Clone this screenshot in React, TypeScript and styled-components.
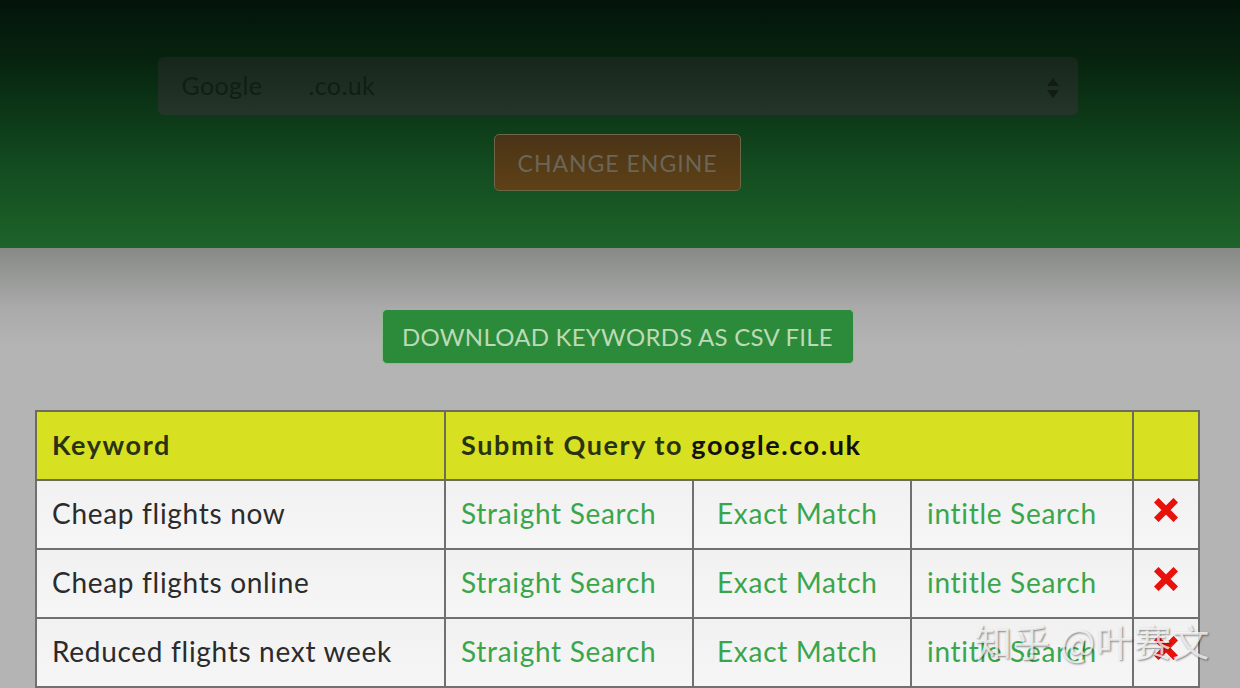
import * as React from "react";
import styled, { createGlobalStyle } from "styled-components";

const GlobalStyle = createGlobalStyle`
  html, body {
    margin: 0;
    padding: 0;
    background: #b4b4b4;
    font-family: Lato, "Open Sans", "Noto Sans", sans-serif;
  }
`;

const keywords = ["Cheap flights now", "Cheap flights online", "Reduced flights next week"];
const actions = ["Straight Search", "Exact Match", "intitle Search"];

const RemoveIcon: React.FC = () => (
  <svg width="24" height="24" viewBox="0 0 24 24">
    <path
      d="M4.5 4.5 L19.5 19.5 M19.5 4.5 L4.5 19.5"
      stroke="#e8120c"
      strokeWidth="6.5"
      strokeLinecap="square"
    />
  </svg>
);

const App: React.FC = () => {
  return (
    <Page>
      <GlobalStyle />
      <Header>
        <EngineSelect>
          <SelectText>
            <span>Google</span>
            <span>.co.uk</span>
          </SelectText>
          <Arrows>
            <svg width="14" height="24" viewBox="0 0 14 24">
              <path d="M7 2 L13 10 L1 10 Z" fill="#111d13" />
              <path d="M7 22 L13 14 L1 14 Z" fill="#111d13" />
            </svg>
          </Arrows>
        </EngineSelect>
        <ChangeButton>CHANGE ENGINE</ChangeButton>
      </Header>
      <Main>
        <DownloadButton>DOWNLOAD KEYWORDS AS CSV FILE</DownloadButton>
        <Table>
          <colgroup>
            <col style={{ width: 409 }} />
            <col style={{ width: 248 }} />
            <col style={{ width: 218 }} />
            <col style={{ width: 222 }} />
            <col style={{ width: 66 }} />
          </colgroup>
          <thead>
            <tr>
              <Th>Keyword</Th>
              <Th colSpan={3}>
                Submit Query to <Domain>google.co.uk</Domain>
              </Th>
              <Th />
            </tr>
          </thead>
          <tbody>
            {keywords.map((k) => (
              <tr key={k}>
                <Td>{k}</Td>
                {actions.map((a, i) => (
                  <Td key={a} $link $pad={i === 1 ? 23 : 15}>
                    {a}
                  </Td>
                ))}
                <Td $center>
                  <RemoveIcon />
                </Td>
              </tr>
            ))}
          </tbody>
        </Table>
      </Main>
      <Watermark>知乎 @叶赛文</Watermark>
    </Page>
  );
};

const Page = styled.div`
  position: relative;
  width: 1240px;
  height: 688px;
  overflow: hidden;
`;

const Header = styled.header`
  height: 248px;
  box-sizing: border-box;
  padding: 57px 5px 0 0;
  display: flex;
  flex-direction: column;
  align-items: center;
  gap: 19px;
  background: linear-gradient(to bottom, #03140a 0%, #07240f 25%, #124a1f 65%, #1e6329 100%);
`;

const EngineSelect = styled.div`
  width: 920px;
  height: 58px;
  box-sizing: border-box;
  border-radius: 6px;
  background: linear-gradient(to bottom, #17261b, #243529);
  display: flex;
  align-items: center;
  justify-content: space-between;
  padding: 0 18px 0 24px;
`;

const SelectText = styled.div`
  display: flex;
  gap: 46px;
  font-size: 25px;
  letter-spacing: 0.4px;
  color: #101e13;
  margin-top: -3px;
`;

const Arrows = styled.div`
  display: flex;
  margin-top: 4px;
`;

const ChangeButton = styled.div`
  width: 247px;
  height: 57px;
  box-sizing: border-box;
  border: 1.5px solid #6e6448;
  border-radius: 5px;
  background: linear-gradient(to bottom, #4a3416, #5e4116);
  color: #6b6656;
  font-size: 23px;
  letter-spacing: 1px;
  display: flex;
  align-items: center;
  justify-content: center;
`;

const Main = styled.main`
  height: 440px;
  background: linear-gradient(to bottom, #878987 0px, #a9aaa9 60px, #b4b4b4 100px, #b4b4b4 100%);
  display: flex;
  flex-direction: column;
  align-items: flex-start;
  padding-top: 61px;
  box-sizing: border-box;
`;

const DownloadButton = styled.div`
  align-self: center;
  margin-right: 5px;
  width: 472px;
  height: 56px;
  box-sizing: border-box;
  border: 1.5px solid #8fbf8f;
  border-radius: 5px;
  background: #2c8b3a;
  color: #bddab6;
  font-size: 24px;
  letter-spacing: 0.25px;
  display: flex;
  align-items: center;
  justify-content: center;
`;

const Table = styled.table`
  margin: 46px 0 0 35px;
  width: 1163px;
  border-collapse: collapse;
  table-layout: fixed;
  border: 2px solid #707070;
`;

const Th = styled.th`
  height: 69px;
  box-sizing: border-box;
  padding: 0 0 3px 15px;
  text-align: left;
  background: #d8e022;
  border: 2px solid #6c6c5c;
  color: #2a3214;
  font-size: 27px;
  letter-spacing: 1.6px;
  font-weight: 700;
`;

const Domain = styled.span`
  color: #111;
`;

const Td = styled.td<{ $link?: boolean; $center?: boolean; $pad?: number }>`
  height: 69px;
  box-sizing: border-box;
  background: linear-gradient(to bottom, #f1f1f1, #f6f6f6);
  border: 2px solid #707070;
  color: ${(p) => (p.$link ? "#3aa64c" : "#2b2b2b")};
  font-size: 28px;
  letter-spacing: 0.7px;
  text-align: ${(p) => (p.$center ? "center" : "left")};
  padding: 0 0 3px ${(p) => (p.$center ? 0 : p.$pad ?? 15)}px;
  vertical-align: middle;
  white-space: nowrap;
  overflow: hidden;

  svg {
    display: block;
    margin: -6px auto 0;
  }
`;

const Watermark = styled.div`
  position: absolute;
  left: 975px;
  top: 614px;
  font-family: "Noto Sans CJK SC", sans-serif;
  font-size: 37px;
  color: rgba(255, 255, 255, 0.75);
  text-shadow: 1px 1px 2px rgba(0, 0, 0, 0.45);
  letter-spacing: 1px;
`;

export default App;
